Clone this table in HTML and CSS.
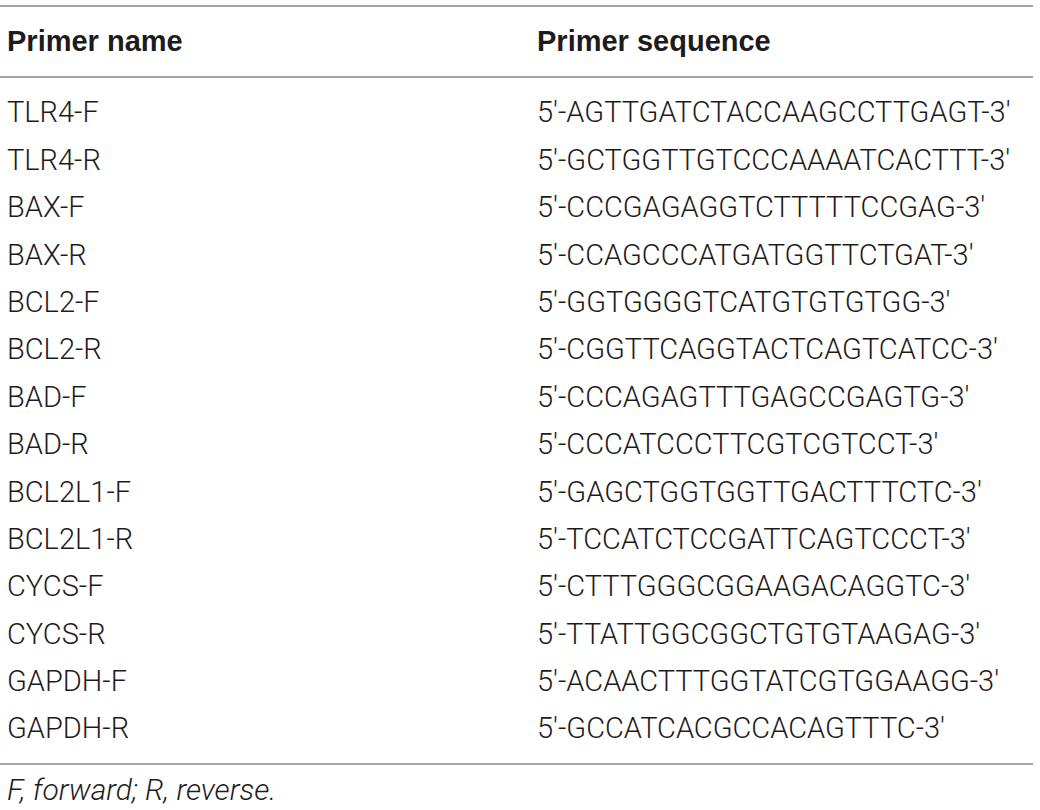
FILE: index.html
```html
<!DOCTYPE html>
<html>
<head>
<meta charset="utf-8">
<link rel="stylesheet" href="styles.css">
</head>
<body>
<div class="table">
  <div class="rule"></div>
  <div class="head">
    <div class="row">
      <div class="c1">Primer name</div>
      <div class="c2">Primer sequence</div>
    </div>
  </div>
  <div class="rule"></div>
  <div class="body">
    <div class="row"><div class="c1">TLR4-F</div><div class="c2">5′-AGTTGATCTACCAAGCCTTGAGT-3′</div></div>
    <div class="row"><div class="c1">TLR4-R</div><div class="c2">5′-GCTGGTTGTCCCAAAATCACTTT-3′</div></div>
    <div class="row"><div class="c1">BAX-F</div><div class="c2">5′-CCCGAGAGGTCTTTTTCCGAG-3′</div></div>
    <div class="row"><div class="c1">BAX-R</div><div class="c2">5′-CCAGCCCATGATGGTTCTGAT-3′</div></div>
    <div class="row"><div class="c1">BCL2-F</div><div class="c2">5′-GGTGGGGTCATGTGTGTGG-3′</div></div>
    <div class="row"><div class="c1">BCL2-R</div><div class="c2">5′-CGGTTCAGGTACTCAGTCATCC-3′</div></div>
    <div class="row"><div class="c1">BAD-F</div><div class="c2">5′-CCCAGAGTTTGAGCCGAGTG-3′</div></div>
    <div class="row"><div class="c1">BAD-R</div><div class="c2">5′-CCCATCCCTTCGTCGTCCT-3′</div></div>
    <div class="row"><div class="c1">BCL2L1-F</div><div class="c2">5′-GAGCTGGTGGTTGACTTTCTC-3′</div></div>
    <div class="row"><div class="c1">BCL2L1-R</div><div class="c2">5′-TCCATCTCCGATTCAGTCCCT-3′</div></div>
    <div class="row"><div class="c1">CYCS-F</div><div class="c2">5′-CTTTGGGCGGAAGACAGGTC-3′</div></div>
    <div class="row"><div class="c1">CYCS-R</div><div class="c2">5′-TTATTGGCGGCTGTGTAAGAG-3′</div></div>
    <div class="row"><div class="c1">GAPDH-F</div><div class="c2">5′-ACAACTTTGGTATCGTGGAAGG-3′</div></div>
    <div class="row"><div class="c1">GAPDH-R</div><div class="c2">5′-GCCATCACGCCACAGTTTC-3′</div></div>
  </div>
  <div class="rule"></div>
  <div class="note">F, forward; R, reverse.</div>
</div>
</body>
</html>
```
FILE: styles.css
```css
html, body {
  margin: 0;
  padding: 0;
  background: #ffffff;
}
body {
  font-family: Roboto, "Liberation Sans", Arial, sans-serif;
  font-weight: 300;
  font-size: 29px;
  color: #1e1b1c;
}
.table {
  width: 1033px;
  padding-top: 5px;
}
.rule {
  height: 2px;
  background: #a3a3a3;
}
.row {
  display: grid;
  grid-template-columns: 537px 1fr;
  height: 47.4px;
  line-height: 47.4px;
  white-space: nowrap;
}
.c1 {
  padding-left: 7px;
}
.head {
  padding: 11px 0 11px;
}
.head .row {
  font-family: "Liberation Sans", Arial, sans-serif;
  font-weight: bold;
  font-size: 29px;
}
.body {
  padding: 11px 0 10px;
}
.note {
  font-style: italic;
  font-size: 30px;
  padding-left: 7px;
  line-height: 49px;
}
```
